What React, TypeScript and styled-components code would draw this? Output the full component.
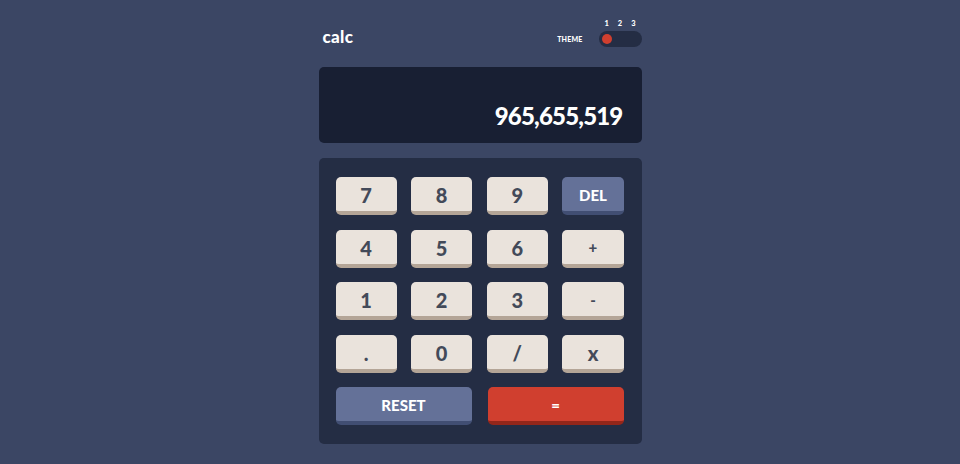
import React from "react";
import styled, { createGlobalStyle } from "styled-components";

const Global = createGlobalStyle`
  html, body { margin: 0; padding: 0; }
  body {
    background: #3b4664;
    font-family: "Lato", "Liberation Sans", sans-serif;
    font-weight: 700;
    color: #ffffff;
  }
`;

const Page = styled.div`
  width: 323px;
  margin: 0 auto;
  padding-top: 19px;
  display: flex;
  flex-direction: column;
`;

const Header = styled.header`
  display: flex;
  justify-content: space-between;
  align-items: flex-end;
  padding-left: 4px;
  margin-bottom: 20px;
`;

const Logo = styled.h1`
  margin: 0 0 2px 0;
  font-size: 17px;
  line-height: 16px;
  font-weight: 900;
  letter-spacing: 0.3px;
  color: #ffffff;
`;

const ThemeArea = styled.div`
  display: flex;
  align-items: flex-end;
  gap: 16px;
`;

const ThemeLabel = styled.span`
  font-size: 7px;
  font-weight: 900;
  letter-spacing: 0.2px;
  line-height: 8px;
  margin-bottom: 4px;
`;

const SwitchCol = styled.div`
  display: flex;
  flex-direction: column;
  gap: 3px;
  width: 43px;
`;

const Numbers = styled.div`
  display: flex;
  justify-content: space-between;
  padding: 0 6px 0 6px;
  font-size: 7.5px;
  font-weight: 900;
  line-height: 9px;
`;

const Track = styled.div`
  height: 16px;
  border-radius: 8px;
  background: #242d44;
  display: flex;
  align-items: center;
  padding: 0 3px;
`;

const Knob = styled.span`
  width: 10px;
  height: 10px;
  border-radius: 50%;
  background: #d03f2f;
`;

const Screen = styled.div`
  height: 76px;
  border-radius: 5px;
  background: #181f33;
  display: flex;
  align-items: flex-end;
  justify-content: flex-end;
  padding: 0 19px 15px 0;
  box-sizing: border-box;
  margin-bottom: 15px;
`;

const Value = styled.span`
  font-size: 24px;
  line-height: 24px;
  font-weight: 900;
  letter-spacing: -0.8px;
  color: #ffffff;
`;

const Keypad = styled.div`
  background: #242d44;
  border-radius: 5px;
  padding: 19px 18px 19px 17px;
  display: grid;
  grid-template-columns: repeat(4, 1fr);
  column-gap: 14.6px;
  row-gap: 14.5px;
`;

type Variant = "num" | "blue" | "red";

const palette: Record<Variant, { bg: string; sh: string; fg: string }> = {
  num: { bg: "#eae3dc", sh: "#b4a597", fg: "#434a59" },
  blue: { bg: "#647198", sh: "#414e73", fg: "#ffffff" },
  red: { bg: "#d03f2f", sh: "#93261a", fg: "#ffffff" },
};

const Key = styled.button<{ $v: Variant; $small?: boolean }>`
  box-sizing: border-box;
  height: 38px;
  border: none;
  border-bottom: 4px solid ${(p) => palette[p.$v].sh};
  border-radius: 5px;
  background: ${(p) => palette[p.$v].bg};
  color: ${(p) => palette[p.$v].fg};
  font-family: "Lato", "Liberation Sans", sans-serif;
  font-weight: 900;
  font-size: ${(p) => (p.$small ? "15px" : "20px")};
  line-height: 1;
  padding: 2px 0 0 0;
  display: flex;
  align-items: center;
  justify-content: center;
  cursor: pointer;
`;

const WideRow = styled.div`
  grid-column: 1 / -1;
  display: grid;
  grid-template-columns: 1fr 1fr;
  column-gap: 16px;
`;

const keys: { label: string; v: Variant; small?: boolean }[] = [
  { label: "7", v: "num" },
  { label: "8", v: "num" },
  { label: "9", v: "num" },
  { label: "DEL", v: "blue", small: true },
  { label: "4", v: "num" },
  { label: "5", v: "num" },
  { label: "6", v: "num" },
  { label: "+", v: "num", small: true },
  { label: "1", v: "num" },
  { label: "2", v: "num" },
  { label: "3", v: "num" },
  { label: "-", v: "num", small: true },
  { label: ".", v: "num" },
  { label: "0", v: "num" },
  { label: "/", v: "num" },
  { label: "x", v: "num" },
];

export default function App() {
  return (
    <>
      <Global />
      <Page>
        <Header>
          <Logo>calc</Logo>
          <ThemeArea>
            <ThemeLabel>THEME</ThemeLabel>
            <SwitchCol>
              <Numbers>
                <span>1</span>
                <span>2</span>
                <span>3</span>
              </Numbers>
              <Track>
                <Knob />
              </Track>
            </SwitchCol>
          </ThemeArea>
        </Header>
        <Screen>
          <Value>965,655,519</Value>
        </Screen>
        <Keypad>
          {keys.map((k) => (
            <Key key={k.label} $v={k.v} $small={k.small}>
              {k.label}
            </Key>
          ))}
          <WideRow>
            <Key $v="blue" $small>
              RESET
            </Key>
            <Key $v="red" $small>
              =
            </Key>
          </WideRow>
        </Keypad>
      </Page>
    </>
  );
}
